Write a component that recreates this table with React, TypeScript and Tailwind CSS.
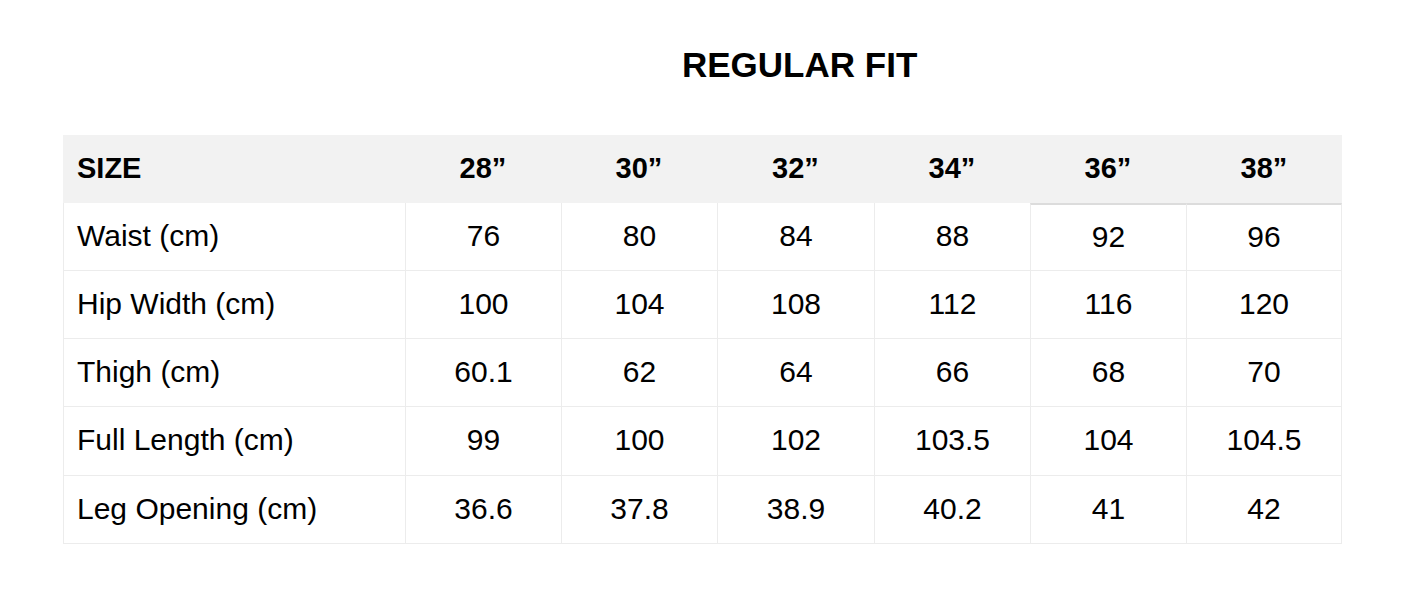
import React from "react";

const sizes = ["28”", "30”", "32”", "34”", "36”", "38”"];
const rows: [string, string[]][] = [
  ["Waist (cm)", ["76", "80", "84", "88", "92", "96"]],
  ["Hip Width (cm)", ["100", "104", "108", "112", "116", "120"]],
  ["Thigh (cm)", ["60.1", "62", "64", "66", "68", "70"]],
  ["Full Length (cm)", ["99", "100", "102", "103.5", "104", "104.5"]],
  ["Leg Opening (cm)", ["36.6", "37.8", "38.9", "40.2", "41", "42"]],
];

export default function App() {
  return (
    <div
      className="w-[1418px] h-[606px] bg-white text-black"
      style={{ fontFamily: '"Liberation Sans", Arial, Helvetica, sans-serif' }}
    >
      <div className="pt-[45px] pl-[682px] text-[35px] leading-[40px] font-bold">REGULAR FIT</div>
      <div className="mt-[50px] ml-[63px] w-[1279px]">
        <div className="grid grid-cols-[342px_156px_156px_157px_156px_156px_156px] bg-[#f2f2f2] h-[68px] items-center text-[29px] font-bold">
          <div className="pl-[14px]">SIZE</div>
          {sizes.map((s) => (
            <div key={s} className="text-center">{s}</div>
          ))}
        </div>
        {rows.map(([label, vals], ri) => (
          <div
            key={label}
            className={
              "grid grid-cols-[342px_156px_156px_157px_156px_156px_156px] text-[30px] " +
              (ri === 3 ? "h-[69px]" : "h-[68px]")
            }
          >
            <div className="pl-[13px] pb-[3px] flex items-center border-l border-b border-[#ececec]">{label}</div>
            {vals.map((v, i) => (
              <div
                key={i}
                className={
                  "flex items-center justify-center pb-[3px] border-l border-b border-[#ececec] " +
                  (i === 5 ? "border-r " : "") +
                  (ri === 0 && i >= 4 ? "border-t-2 border-t-[#dcdcdc] " : "")
                }
              >
                {v}
              </div>
            ))}
          </div>
        ))}
      </div>
    </div>
  );
}
